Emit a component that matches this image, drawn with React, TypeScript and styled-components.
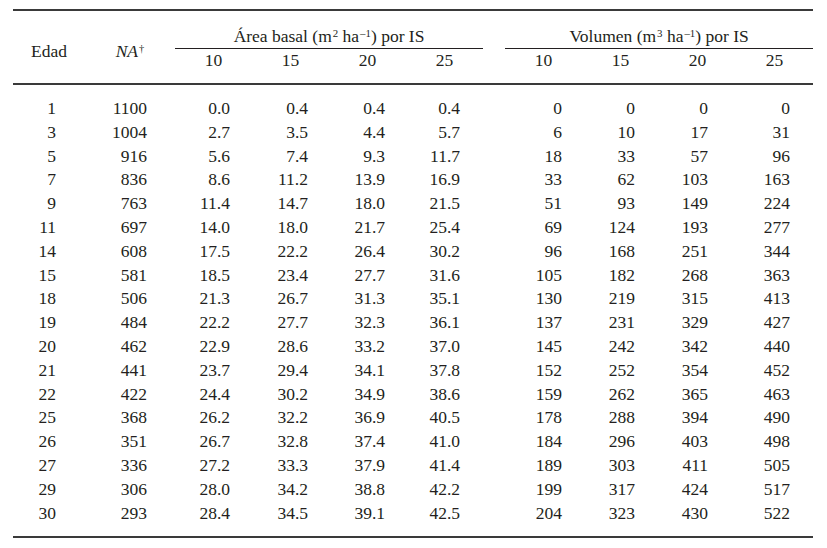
import React from "react";
import styled, { createGlobalStyle } from "styled-components";

const GlobalStyle = createGlobalStyle`
  html, body {
    margin: 0;
    padding: 0;
    background: #ffffff;
  }
  body {
    font-family: "Liberation Serif", "DejaVu Serif", serif;
    color: #231f20;
  }
`;

// rows: edad, NA, area basal 10/15/20/25, volumen 10/15/20/25
const rows: (string | number)[][] = [
  [1, 1100, "0.0", "0.4", "0.4", "0.4", 0, 0, 0, 0],
  [3, 1004, "2.7", "3.5", "4.4", "5.7", 6, 10, 17, 31],
  [5, 916, "5.6", "7.4", "9.3", "11.7", 18, 33, 57, 96],
  [7, 836, "8.6", "11.2", "13.9", "16.9", 33, 62, 103, 163],
  [9, 763, "11.4", "14.7", "18.0", "21.5", 51, 93, 149, 224],
  [11, 697, "14.0", "18.0", "21.7", "25.4", 69, 124, 193, 277],
  [14, 608, "17.5", "22.2", "26.4", "30.2", 96, 168, 251, 344],
  [15, 581, "18.5", "23.4", "27.7", "31.6", 105, 182, 268, 363],
  [18, 506, "21.3", "26.7", "31.3", "35.1", 130, 219, 315, 413],
  [19, 484, "22.2", "27.7", "32.3", "36.1", 137, 231, 329, 427],
  [20, 462, "22.9", "28.6", "33.2", "37.0", 145, 242, 342, 440],
  [21, 441, "23.7", "29.4", "34.1", "37.8", 152, 252, 354, 452],
  [22, 422, "24.4", "30.2", "34.9", "38.6", 159, 262, 365, 463],
  [25, 368, "26.2", "32.2", "36.9", "40.5", 178, 288, 394, 490],
  [26, 351, "26.7", "32.8", "37.4", "41.0", 184, 296, 403, 498],
  [27, 336, "27.2", "33.3", "37.9", "41.4", 189, 303, 411, 505],
  [29, 306, "28.0", "34.2", "38.8", "42.2", 199, 317, 424, 517],
  [30, 293, "28.4", "34.5", "39.1", "42.5", 204, 323, 430, 522],
];

const indices = ["10", "15", "20", "25"];

// right padding of each data column, so numbers line up like the print
const areaPad = [22, 21, 21, 23];
const volPad = [20, 24, 28, 23];

const App = () => {
  return (
    <>
      <GlobalStyle />
      <Table>
        <colgroup>
          <col style={{ width: 72 }} />
          <col style={{ width: 90 }} />
          {indices.map((i) => (
            <col key={"a" + i} style={{ width: 77 }} />
          ))}
          <col style={{ width: 22 }} />
          {indices.map((i) => (
            <col key={"v" + i} style={{ width: 77 }} />
          ))}
        </colgroup>
        <thead>
          <tr>
            <SideTh rowSpan={2}>Edad</SideTh>
            <SideTh rowSpan={2}>
              <i>NA</i>
              <Sup $small>†</Sup>
            </SideTh>
            <SpanTh colSpan={4}>
              Área basal (m<Sup>2</Sup> ha<Sup>–1</Sup>) por IS
            </SpanTh>
            <GapTh rowSpan={2} />
            <SpanTh colSpan={4}>
              Volumen (m<Sup>3</Sup> ha<Sup>–1</Sup>) por IS
            </SpanTh>
          </tr>
          <tr>
            {indices.map((i) => (
              <SubTh key={"ah" + i}>{i}</SubTh>
            ))}
            {indices.map((i) => (
              <SubTh key={"vh" + i}>{i}</SubTh>
            ))}
          </tr>
        </thead>
        <tbody>
          {rows.map((r, ri) => (
            <Row key={ri}>
              <Td $pr={29}>{r[0]}</Td>
              <Td $pr={28}>{r[1]}</Td>
              {r.slice(2, 6).map((v, i) => (
                <Td key={"a" + i} $pr={areaPad[i]}>
                  {v}
                </Td>
              ))}
              <Td $pr={0} />
              {r.slice(6, 10).map((v, i) => (
                <Td key={"v" + i} $pr={volPad[i]}>
                  {v}
                </Td>
              ))}
            </Row>
          ))}
        </tbody>
      </Table>
    </>
  );
};

export default App;

const Table = styled.table`
  margin: 9px 0 0 13px;
  width: 800px;
  table-layout: fixed;
  border-collapse: collapse;
  border-top: 2px solid #3a3a3a;
  border-bottom: 2px solid #3a3a3a;
  font-size: 17.5px;
  line-height: 22px;

  thead tr:last-child th,
  thead th[rowspan] {
    border-bottom: 2px solid #3a3a3a;
  }
`;

const SideTh = styled.th`
  font-weight: normal;
  text-align: center;
  vertical-align: middle;
  padding: 8px 0 0;
  white-space: nowrap;
`;

const SpanTh = styled.th`
  font-weight: normal;
  text-align: center;
  padding: 14px 0 1px;
  border-bottom: 1px solid #231f20;
  white-space: nowrap;
`;

const GapTh = styled.th`
  padding: 0;
`;

const SubTh = styled.th`
  font-weight: normal;
  text-align: center;
  padding: 0 0 12px;
`;

const Sup = styled.sup<{ $small?: boolean }>`
  font-size: ${(p) => (p.$small ? "0.6em" : "0.62em")};
  line-height: 0;
  vertical-align: 0.5em;
  margin-left: 1px;
`;

const Row = styled.tr`
  &:first-child td {
    padding-top: 12px;
  }
  &:last-child td {
    padding-bottom: 11px;
  }
`;

const Td = styled.td<{ $pr: number }>`
  text-align: right;
  padding: 0 ${(p) => p.$pr}px 0 0;
  line-height: 23.8px;
  white-space: nowrap;
`;
